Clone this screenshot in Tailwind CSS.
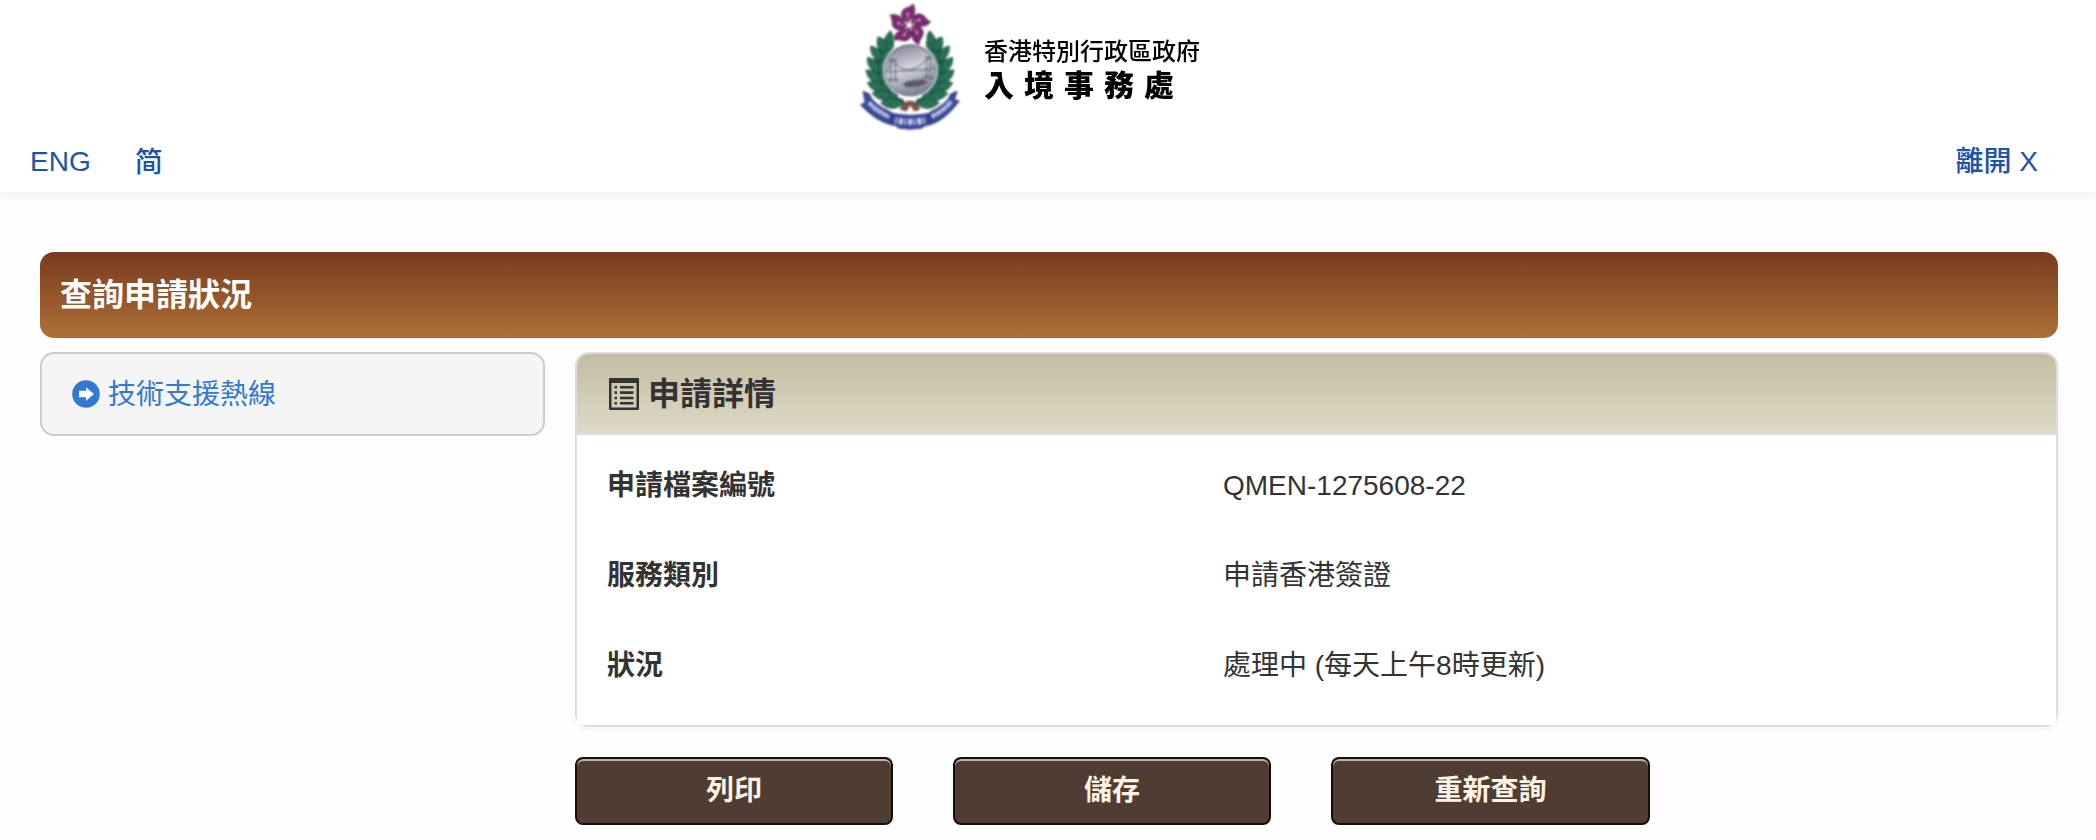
<!DOCTYPE html>
<html lang="zh-Hant-HK">
<head>
<meta charset="utf-8">
<title>查詢申請狀況</title>
<script src="https://cdn.jsdelivr.net/npm/@tailwindcss/browser@4"></script>
</head>
<body class="w-[2096px] h-[840px] overflow-hidden bg-[#fefefe] text-[#333] text-[28px] leading-10 font-['Liberation_Sans','Noto_Sans_CJK_TC',sans-serif]">
<header class="h-48 bg-white flex flex-col shadow-[0_2px_12px_rgba(0,0,0,0.08)]">
  <div class="h-[140px] pl-[850px] flex">
    <svg class="w-[120px] h-[140px] shrink-0 blur-[0.8px]" viewBox="0 0 360 420">
      <defs>
        <linearGradient id="sky" x1="0" y1="0" x2="0.3" y2="1"><stop offset="0" stop-color="#77778f"/><stop offset=".55" stop-color="#d5d6dc"/><stop offset="1" stop-color="#85899b"/></linearGradient>
        <g id="petal"><path d="M174 68C157 60 149 44 159 31C167 21 181 25 188 12C196 22 196 37 189 48C184 56 177 59 174 68Z" fill="#7d2a70" stroke="#4a1744" stroke-width="3"/><path d="M174 62Q169 49 175 40" fill="none" stroke="#d3a0c8" stroke-width="2.5"/><circle cx="173" cy="42" r="3.5" fill="#ecc5e4"/></g>
        <g id="laurel" fill="#2a7058" stroke="#174737" stroke-width="2.5">
          <path d="M116 104C84 130 62 180 70 236C78 280 120 316 164 312L160 298C126 290 104 262 102 220C100 180 110 150 124 128Z" fill="#1d5443" stroke="none"/>
          <path d="M121 92Q141 116 114 148Q90 122 121 92Z"/>
          <path d="M84 111Q117 116 110 158Q72 150 84 111Z"/>
          <path d="M62 138Q100 146 100 187Q60 178 62 138Z"/>
          <path d="M52 172Q92 180 94 221Q50 214 52 172Z"/>
          <path d="M48 210Q86 208 98 247Q54 252 48 210Z"/>
          <path d="M52 248Q88 234 112 270Q72 288 52 248Z"/>
          <path d="M66 280Q100 256 132 290Q96 316 66 280Z"/>
          <path d="M92 309Q124 280 164 308Q128 342 92 309Z"/>
          <path d="M131 124Q134 154 107 160Q100 134 131 124Z"/>
          <path d="M116 147Q124 178 94 190Q84 160 116 147Z"/>
          <path d="M105 176Q118 204 90 220Q74 192 105 176Z"/>
          <path d="M102 207Q120 232 96 250Q74 224 102 207Z"/>
          <path d="M106 236Q130 254 112 277Q84 258 106 236Z"/>
          <path d="M119 262Q150 272 140 299Q106 290 119 262Z"/>
        </g>
      </defs>
      <use href="#laurel"/><use href="#laurel" transform="translate(360 0) scale(-1 1)"/>
      <circle cx="181" cy="211" r="82" fill="#fff"/>
      <circle cx="181" cy="211" r="76" fill="url(#sky)" stroke="#66667b" stroke-width="4"/>
      <g fill="none" stroke="#595c6c" stroke-width="3"><path d="M106 216L254 207M122 177V246M136 177V246M229 168V240M240 168V240M122 180H136M229 174H240M107 215Q120 204 127 178Q155 218 182 209Q220 198 235 170Q245 203 255 207"/><path d="M115 239H145M218 232H250" stroke-width="4"/><path d="M160 252Q179 241 187 243L218 239L232 247L207 258L168 260Z" fill="#555967"/><path d="M168 158L178 151L188 158" stroke="#9c9cac"/></g>
      <path d="M151 328Q158 304 180 303Q202 304 209 328L193 333L181 314L169 333Z" fill="#84503f" stroke="#513328" stroke-width="2"/>
      <g fill="#3a489c" stroke="#2a3172" stroke-width="3">
        <path d="M39 274L58 282Q66 311 124 337L126 375Q77 363 32 315L46 307Z"/>
        <path d="M321 274L302 282Q294 311 239 337L237 375Q283 363 328 303L313 300Z"/>
        <path d="M125 340Q181 352 240 340L237 374Q222 377 215 384Q180 391 146 384Q140 375 125 374Z"/>
      </g>
      <g fill="none" stroke="#cdd2ea" stroke-width="13"><path d="M57 308Q81 334 117 350" stroke-dasharray="9 2 6 2"/><path d="M245 349Q282 333 304 303" stroke-dasharray="9 2 6 2"/><path d="M136 361Q181 371 230 360" stroke-width="19" stroke-dasharray="5 6 12 5"/></g>
      <use href="#petal"/><use href="#petal" transform="rotate(72 178 75)"/><use href="#petal" transform="rotate(144 178 75)"/><use href="#petal" transform="rotate(216 178 75)"/><use href="#petal" transform="rotate(288 178 75)"/>
    </svg>
    <div class="pl-[14px] pt-[36px] text-black font-['Noto_Sans_CJK_TC',sans-serif] blur-[0.6px]">
      <div class="text-[24px] leading-[28px] font-medium whitespace-nowrap">香港特別行政區政府</div>
      <div class="pt-[2px] text-[30px] leading-[34px] font-black tracking-[10px] whitespace-nowrap">入境事務處</div>
    </div>
  </div>
  <nav class="h-[42px] pl-[30px] pr-[58px] pt-px flex items-center text-[#2053a8]">
    <a>ENG</a>
    <a class="ml-[44px] -mt-[3px] font-medium font-['Noto_Sans_CJK_SC',sans-serif]">简</a>
    <a class="ml-auto pt-px font-medium">離開 X</a>
  </nav>
</header>
<main class="pt-[60px] pl-10 pr-[38px]">
  <h1 class="h-[86px] rounded-[14px] pl-5 pb-px flex items-center bg-linear-to-b from-[#793b1e] to-[#ae7037] text-white text-[32px] font-bold"><span>查詢申請狀況</span></h1>
  <div class="mt-[14px] flex items-start gap-[30px]">
    <aside class="w-[505px] h-[84px] shrink-0 rounded-[14px] border-2 border-[#ccc] bg-[#f5f5f5] pl-[30px] flex items-center text-[#3278d5]">
      <svg class="w-7 h-7 mr-[8px]" viewBox="0 0 28 28"><circle cx="14" cy="14" r="13.8" fill="#3278d5"/><path d="M7 10.8H14V7.2L22 14L14 20.8V17.2H7Z" fill="#fff"/></svg>
      <a class="pt-px">技術支援熱線</a>
    </aside>
    <div class="flex-1">
      <section class="h-[375px] rounded-[14px] border-2 border-[#ddd] bg-white flex flex-col shadow-[0_2px_6px_rgba(0,0,0,0.05)]">
        <h2 class="h-[81px] shrink-0 rounded-t-[12px] border-b-2 border-[#ddd] pl-8 flex items-center bg-linear-to-b from-[#c4bca3] to-[#dddac5] text-[32px] font-bold">
          <svg class="w-[30px] h-8 mr-[9px]" viewBox="0 0 30 32"><path fill="#333" fill-rule="evenodd" d="M1 0H29Q30 0 30 1V31Q30 32 29 32H1Q0 32 0 31V1Q0 0 1 0ZM2.5 5V29.5H27.5V5Z"/><path stroke="#333" stroke-width="2.6" d="M5.5 9.2H8M11 9.2H24.5M5.5 14.6H8M11 14.6H24.5M5.5 20H8M11 20H24.5M5.5 25.2H8M11 25.2H24.5"/></svg>
          <span class="pt-px">申請詳情</span>
        </h2>
        <dl class="flex-1 bg-white pt-[6px] pl-[30px] grid grid-cols-[616px_1fr] auto-rows-[90px] items-center">
          <dt class="font-bold">申請檔案編號</dt><dd class="pb-px">QMEN-1275608-22</dd>
          <dt class="font-bold">服務類別</dt><dd>申請香港簽證</dd>
          <dt class="font-bold">狀況</dt><dd>處理中 (每天上午8時更新)</dd>
        </dl>
      </section>
      <div class="mt-[30px] flex gap-[60px]">
        <button class="w-[318px] h-[68px] rounded-[8px] border-2 border-[#1a0d04] bg-[#4f3d33] text-[#fff3e6] font-bold shadow-[inset_0_2px_0_#b5b3ac]">列印</button>
        <button class="w-[318px] h-[68px] rounded-[8px] border-2 border-[#1a0d04] bg-[#4f3d33] text-[#fff3e6] font-bold shadow-[inset_0_2px_0_#b5b3ac]">儲存</button>
        <button class="w-[319px] h-[68px] rounded-[8px] border-2 border-[#1a0d04] bg-[#4f3d33] text-[#fff3e6] font-bold shadow-[inset_0_2px_0_#b5b3ac]">重新查詢</button>
      </div>
    </div>
  </div>
</main>
</body>
</html>
